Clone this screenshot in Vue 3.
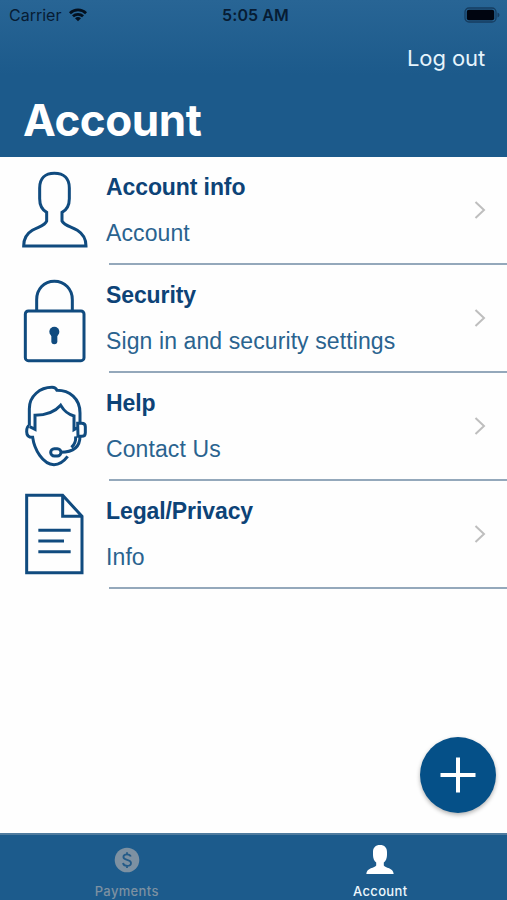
<template>
  <div class="screen">
    <header class="header">
      <div class="status-bar">
        <div class="carrier">
          <span>Carrier</span>
          <svg width="20" height="15" viewBox="0 0 20 15">
            <path d="M1 5.2a13 13 0 0 1 18 0l-1.9 2a10.3 10.3 0 0 0-14.2 0z" />
            <path d="M4 8.3a8.8 8.8 0 0 1 12 0l-1.9 2a6 6 0 0 0-8.2 0z" />
            <path d="M7 11.3a4.5 4.5 0 0 1 6 0l-3 3z" />
          </svg>
        </div>
        <span class="time">5:05 AM</span>
        <svg class="battery" width="36" height="16" viewBox="0 0 36 16">
          <rect x="1" y="1" width="31" height="14" rx="4" fill="none" stroke="#163d60" stroke-width="1.3" />
          <rect x="2.8" y="2.8" width="27.4" height="10.4" rx="2" fill="#000510" />
          <path d="M33.5 5.5q2 .7 2 2.5t-2 2.5z" fill="#163d60" />
        </svg>
      </div>
      <button class="logout">Log out</button>
      <h1>Account</h1>
    </header>

    <main class="list">
      <div v-for="item in items" :key="item.title" class="row">
        <svg class="row-icon" width="107" height="108" viewBox="-30 -9 321 324">
          <g v-if="item.icon === 'person'">
            <path d="M133 40C105 40 89 56 89 84V116C89 136 98 150 110 157V183C106 197 85 200 67 211C50 221 41 234 41 258H228C228 234 218 221 202 211C184 200 163 197 156 183V157C169 150 178 136 178 116V84C178 56 162 40 133 40Z" />
          </g>
          <g v-else-if="item.icon === 'lock'">
            <rect x="46" y="129" width="176" height="149" rx="9" />
            <path d="M80 129V95C80 63 102 40 133 40S187 63 187 95V129" />
            <circle class="solid" cx="133" cy="191" r="15" />
            <path class="stem" d="M133 194V220" />
          </g>
          <g v-else-if="item.icon === 'headset'">
            <path d="M58 149V98C58 60 90 34 126 34C134 34 138 36 141 43C178 43 210 67 210 111V142" />
            <path d="M58 149C51 151 50 158 50 167C50 178 57 184 68 184C73 220 98 265 132 266C149 266 160 258 173 241" />
            <path d="M59 152L75 160V118C105 118 132 111 152 88C164 108 174 115 192 120V161L202 155" />
            <path d="M203 142H215Q226 142 226 152V170Q226 181 215 181H204Z" />
            <path d="M210 181C210 214 190 229 152 229M197 181C198 198 193 207 184 214" />
            <rect x="122" y="218" width="31" height="22" rx="11" />
          </g>
          <g v-else>
            <path d="M50 34H158L216 97V266H50ZM158 34V97H216" />
            <path d="M85 139H182M85 171H162M85 203H182" />
          </g>
        </svg>
        <div class="row-body">
          <div class="text">
            <strong>{{ item.title }}</strong>
            <span>{{ item.subtitle }}</span>
          </div>
          <svg class="chevron" width="12" height="20" viewBox="0 0 12 20">
            <path d="M1.5 2L10 10L1.5 18" />
          </svg>
        </div>
      </div>
    </main>

    <button class="fab">
      <svg width="36" height="36" viewBox="0 0 36 36">
        <path d="M18 0.5V35.5M0.5 18H35.5" />
      </svg>
    </button>

    <nav class="tabs">
      <button class="tab">
        <svg width="30" height="32" viewBox="0 0 30 32">
          <circle cx="15" cy="16" r="12.3" fill="#7d91a2" />
          <path d="M18.8 12.6C18.3 11 17 10.3 15 10.3C12.8 10.3 11.4 11.4 11.4 13C11.4 16.7 19 14.8 19 18.9C19 20.6 17.4 21.8 15.1 21.8C12.8 21.8 11.3 20.8 11 19M15 8.2V10.3M15 21.8V23.9" fill="none" stroke="#245b88" stroke-width="1.8" />
        </svg>
        <span>Payments</span>
      </button>
      <button class="tab active">
        <svg width="30" height="32" viewBox="0 0 30 32">
          <path d="M15 1C10.4 1 8 3.7 8 8V11C8 14.3 9.2 17 11.2 18.5V21.5C10 24 1.5 23.7 1.3 30H28.7C28.5 23.7 20 24 18.8 21.5V18.5C20.8 17 22 14.3 22 11V8C22 3.7 19.6 1 15 1Z" fill="#fff" />
        </svg>
        <span>Account</span>
      </button>
    </nav>
  </div>
</template>

<script setup>
const items = [
  { title: 'Account info', subtitle: 'Account', icon: 'person' },
  { title: 'Security', subtitle: 'Sign in and security settings', icon: 'lock' },
  { title: 'Help', subtitle: 'Contact Us', icon: 'headset' },
  { title: 'Legal/Privacy', subtitle: 'Info', icon: 'document' },
]
</script>

<style>
body {
  margin: 0;
}
</style>

<style scoped>
.screen {
  position: relative;
  display: flex;
  flex-direction: column;
  height: 900px;
  overflow: hidden;
  background: #fefefe;
  font-family: "Liberation Sans", Arial, sans-serif;
}
button {
  padding: 0;
  border: 0;
  background: none;
}
.header {
  display: flex;
  flex-direction: column;
  flex: none;
  box-sizing: border-box;
  height: 157px;
  background: linear-gradient(#286595, #1c5a8b 75px);
  font-family: Inter, sans-serif;
}
.status-bar {
  display: grid;
  grid-template-columns: 1fr auto 1fr;
  align-items: center;
  height: 30px;
  padding: 0 7px 0 9px;
  color: #071c33;
  font-size: 16px;
  line-height: 30px;
}
.carrier {
  display: flex;
  align-items: center;
  gap: 7px;
}
.carrier svg {
  margin-top: -2px;
  fill: #03101f;
}
.time {
  padding-left: 2px;
  font-weight: 600;
  letter-spacing: 0.1px;
}
.battery {
  justify-self: end;
  margin-top: -1px;
}
.logout {
  align-self: flex-end;
  margin: 12px 22px 0 0;
  color: #e6f4fc;
  font: 22px/32px Inter, sans-serif;
  letter-spacing: -0.1px;
}
h1 {
  margin: 20px 0 0 23px;
  color: #fff;
  font-size: 44px;
  font-weight: 700;
  line-height: 52px;
  letter-spacing: -0.45px;
}
.list {
  flex: 1;
}
.row {
  display: flex;
  height: 108px;
}
.row-icon {
  flex: none;
  fill: none;
  stroke: #104b7f;
  stroke-width: 9;
}
.row-icon .solid {
  fill: #104b7f;
  stroke: none;
}
.row-icon .stem {
  stroke-width: 18;
  stroke-linecap: round;
}
.row-body {
  display: flex;
  flex: 1;
  align-items: center;
  justify-content: space-between;
  box-sizing: border-box;
  margin-left: 2px;
  padding-right: 21px;
  border-bottom: 2px solid #94a8bb;
}
.text {
  display: flex;
  flex-direction: column;
  gap: 18px;
  margin-left: -3px;
}
.text strong {
  color: #0d4377;
  font-size: 23px;
  line-height: 28px;
  letter-spacing: -0.1px;
}
.text span {
  color: #2a638f;
  font-size: 23px;
  line-height: 28px;
  letter-spacing: 0.1px;
}
.chevron {
  fill: none;
  stroke: #bebebe;
  stroke-width: 2;
}
.fab {
  position: absolute;
  right: 11px;
  top: 737px;
  display: flex;
  align-items: center;
  justify-content: center;
  width: 76px;
  height: 76px;
  border-radius: 50%;
  background: #055088;
  box-shadow: 0 2px 4px rgba(0, 0, 0, 0.3);
}
.fab svg {
  stroke: #fff;
  stroke-width: 4;
}
.tabs {
  display: grid;
  grid-template-columns: 1fr 1fr;
  flex: none;
  box-sizing: border-box;
  height: 67px;
  border-top: 2px solid #507c9f;
  background: #1c5b8c;
}
.tab {
  display: flex;
  flex-direction: column;
  align-items: center;
  padding-top: 9px;
  color: #7d91a2;
  font: 500 13px/18px Inter, sans-serif;
  letter-spacing: 0.35px;
}
.tab span {
  margin-top: 6px;
}
.tab.active {
  color: #edf7fc;
}
</style>
